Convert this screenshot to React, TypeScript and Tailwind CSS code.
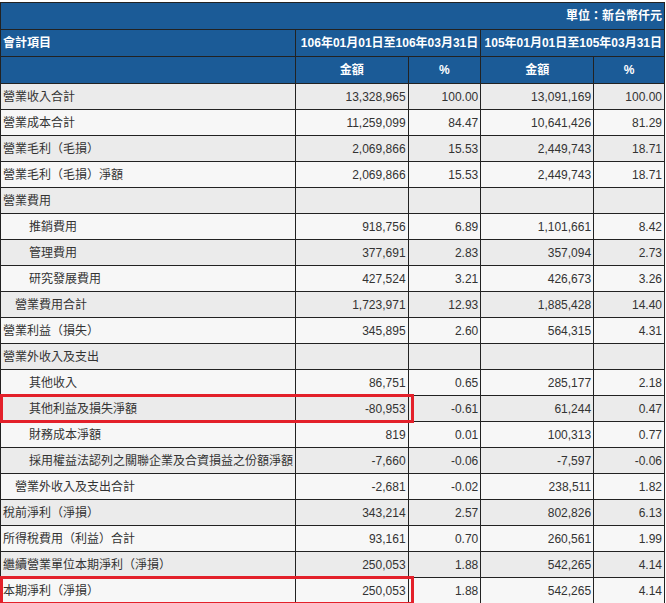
import React from "react";

type Row = { label: string; indent?: number; a?: string; ap?: string; b?: string; bp?: string; mark?: boolean };

const rows: Row[] = [
  { label: "營業收入合計", a: "13,328,965", ap: "100.00", b: "13,091,169", bp: "100.00" },
  { label: "營業成本合計", a: "11,259,099", ap: "84.47", b: "10,641,426", bp: "81.29" },
  { label: "營業毛利（毛損）", a: "2,069,866", ap: "15.53", b: "2,449,743", bp: "18.71" },
  { label: "營業毛利（毛損）淨額", a: "2,069,866", ap: "15.53", b: "2,449,743", bp: "18.71" },
  { label: "營業費用" },
  { label: "推銷費用", indent: 2, a: "918,756", ap: "6.89", b: "1,101,661", bp: "8.42" },
  { label: "管理費用", indent: 2, a: "377,691", ap: "2.83", b: "357,094", bp: "2.73" },
  { label: "研究發展費用", indent: 2, a: "427,524", ap: "3.21", b: "426,673", bp: "3.26" },
  { label: "營業費用合計", indent: 1, a: "1,723,971", ap: "12.93", b: "1,885,428", bp: "14.40" },
  { label: "營業利益（損失）", a: "345,895", ap: "2.60", b: "564,315", bp: "4.31" },
  { label: "營業外收入及支出" },
  { label: "其他收入", indent: 2, a: "86,751", ap: "0.65", b: "285,177", bp: "2.18" },
  { label: "其他利益及損失淨額", indent: 2, a: "-80,953", ap: "-0.61", b: "61,244", bp: "0.47", mark: true },
  { label: "財務成本淨額", indent: 2, a: "819", ap: "0.01", b: "100,313", bp: "0.77" },
  { label: "採用權益法認列之關聯企業及合資損益之份額淨額", indent: 2, a: "-7,660", ap: "-0.06", b: "-7,597", bp: "-0.06" },
  { label: "營業外收入及支出合計", indent: 1, a: "-2,681", ap: "-0.02", b: "238,511", bp: "1.82" },
  { label: "稅前淨利（淨損）", a: "343,214", ap: "2.57", b: "802,826", bp: "6.13" },
  { label: "所得稅費用（利益）合計", a: "93,161", ap: "0.70", b: "260,561", bp: "1.99" },
  { label: "繼續營業單位本期淨利（淨損）", a: "250,053", ap: "1.88", b: "542,265", bp: "4.14" },
  { label: "本期淨利（淨損）", a: "250,053", ap: "1.88", b: "542,265", bp: "4.14", mark: true },
];

const indents = ["pl-[2px]", "pl-[14px]", "pl-[28px]"];
const td = "border border-[#222] px-[2px] h-[26px] whitespace-nowrap";
const th = "border border-[#222] px-[2px] h-[27px] font-bold text-white whitespace-nowrap";

export default function App() {
  return (
    <div className="w-[666px] h-[603px] overflow-hidden bg-white text-[12px] text-[#333]" style={{ fontFamily: '"Liberation Sans", "Noto Sans CJK TC", sans-serif' }}>
      <table className="border-collapse w-[665px] mt-[2px]">
        <thead className="bg-[#1b5b97]">
          <tr>
            <th colSpan={5} className={th + " text-right"}>單位：新台幣仟元</th>
          </tr>
          <tr>
            <th className={th + " text-left"}>會計項目</th>
            <th colSpan={2} className={th + " text-right"}>106年01月01日至106年03月31日</th>
            <th colSpan={2} className={th + " text-right"}>105年01月01日至105年03月31日</th>
          </tr>
          <tr>
            <th className={th + " w-[295px]"}></th>
            <th className={th + " w-[113px] text-center"}>金額</th>
            <th className={th + " w-[73px] text-center"}>%</th>
            <th className={th + " w-[113px] text-center"}>金額</th>
            <th className={th + " w-[71px] text-center"}>%</th>
          </tr>
        </thead>
        <tbody>
          {rows.map((r, i) => (
            <tr key={r.label} className={i % 2 === 0 ? "bg-[#ebebeb]" : "bg-[#f7f7f7]"}>
              <td className={td + " relative " + indents[r.indent ?? 0]}>
                {r.label}
                {r.mark && (
                  <div className="absolute left-[-1px] top-[-2px] w-[414px] h-[29px] border-[3px] border-[#e3202a] pointer-events-none" />
                )}
              </td>
              <td className={td + " text-right"}>{r.a}</td>
              <td className={td + " text-right"}>{r.ap}</td>
              <td className={td + " text-right"}>{r.b}</td>
              <td className={td + " text-right"}>{r.bp}</td>
            </tr>
          ))}
        </tbody>
      </table>
    </div>
  );
}
